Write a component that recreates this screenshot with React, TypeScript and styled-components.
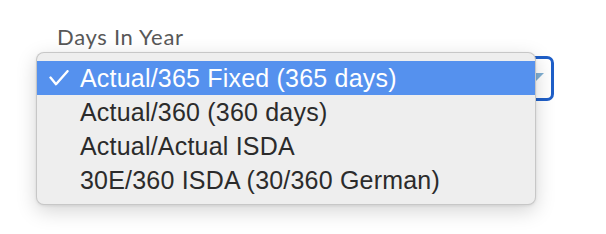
import styled, { createGlobalStyle } from 'styled-components';

const options = [
  'Actual/365 Fixed (365 days)',
  'Actual/360 (360 days)',
  'Actual/Actual ISDA',
  '30E/360 ISDA (30/360 German)',
];

const GlobalStyle = createGlobalStyle`
  html, body {
    margin: 0;
    padding: 0;
    background: #ffffff;
  }
`;

const App = () => {
  const selected = 0;

  return (
    <>
      <GlobalStyle />
      <Page>
        <Field>
          <Label>Days In Year</Label>
          <SelectBox>
            <Arrow />
            <Menu>
              {options.map((opt, i) => (
                <Option key={opt} active={i === selected}>
                  <CheckSlot>
                    {i === selected && (
                      <svg width="20" height="16" viewBox="0 0 20 16">
                        <path
                          d="M1.5 7.6 L7 14.2 L18.5 1.2"
                          fill="none"
                          stroke="#fff"
                          strokeWidth="2.4"
                          strokeLinecap="round"
                          strokeLinejoin="round"
                        />
                      </svg>
                    )}
                  </CheckSlot>
                  {opt}
                </Option>
              ))}
            </Menu>
          </SelectBox>
        </Field>
      </Page>
    </>
  );
};

const Page = styled.div`
  width: 606px;
  height: 234px;
  box-sizing: border-box;
  padding: 24px 0 0 57px;
`;

const Field = styled.div`
  display: flex;
  flex-direction: column;
  gap: 6px;
  width: 497px;
`;

const Label = styled.label`
  font-family: Lato, 'Noto Sans', sans-serif;
  font-size: 22px;
  line-height: 26px;
  letter-spacing: 0.7px;
  color: #585858;
`;

const SelectBox = styled.div`
  position: relative;
  box-sizing: border-box;
  height: 45px;
  border: 3px solid #1f5fc8;
  border-radius: 7px;
  background: #ffffff;
`;

const Arrow = styled.span`
  position: absolute;
  right: 7px;
  top: 14px;
  width: 0;
  height: 0;
  border-left: 8px solid transparent;
  border-right: 8px solid transparent;
  border-top: 8px solid #80afd3;
`;

const Menu = styled.ul`
  position: absolute;
  left: -24px;
  top: -7px;
  width: 500px;
  box-sizing: border-box;
  margin: 0;
  padding: 8px 0 7px;
  list-style: none;
  background: #eeeeee;
  border: 1px solid rgba(0, 0, 0, 0.16);
  border-radius: 8px;
  box-shadow: 0 6px 20px rgba(0, 0, 0, 0.17), 0 1px 3px rgba(0, 0, 0, 0.08);
`;

const Option = styled.li<{ active: boolean }>`
  display: flex;
  align-items: center;
  height: 34px;
  padding-left: 12px;
  font-family: 'Liberation Sans', Arial, sans-serif;
  font-size: 25px;
  letter-spacing: 0.2px;
  white-space: nowrap;
  color: ${props => (props.active ? '#ffffff' : '#2b2b2b')};
  background: ${props => (props.active ? '#5591ee' : 'transparent')};
`;

const CheckSlot = styled.span`
  display: inline-flex;
  align-items: center;
  width: 31px;
  height: 16px;
`;

export default App;
